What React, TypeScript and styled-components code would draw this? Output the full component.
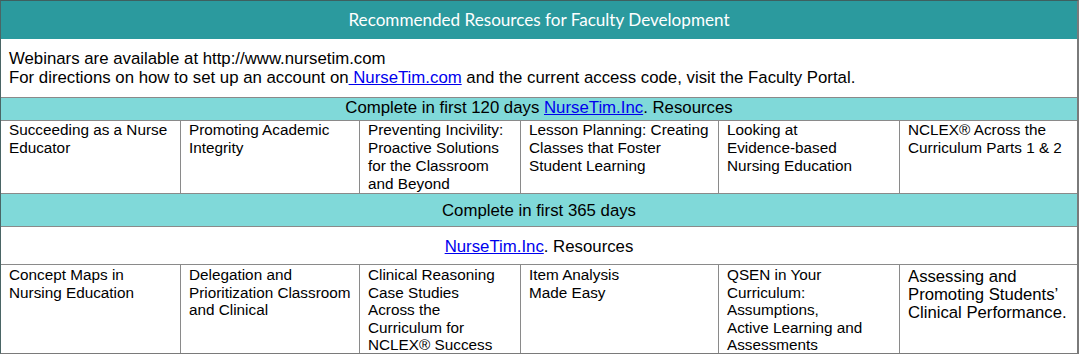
import React from 'react';
import styled, { createGlobalStyle } from 'styled-components';

const GlobalStyle = createGlobalStyle`
  html, body {
    margin: 0;
    padding: 0;
    background: #ffffff;
  }
  body {
    font-family: "Liberation Sans", Arial, sans-serif;
    color: #000000;
  }
`;

const COLS = '180px 179px 161px 198px 181px 1fr';

const Table = styled.div`
  width: 1079px;
  box-sizing: border-box;
  border-top: 1px solid #3e5f5f;
  border-left: 1px solid #4a6565;
  border-right: 2px solid #7a7a7a;
  border-bottom: 1px solid #7a7a7a;
`;

const TitleBar = styled.div`
  height: 38px;
  background: #2b9a9e;
  color: #ffffff;
  font-family: Lato, "Open Sans", sans-serif;
  font-size: 17.1px;
  display: flex;
  align-items: center;
  justify-content: center;
  padding-bottom: 1px;
  box-sizing: border-box;
`;

const Intro = styled.div`
  height: 59px;
  box-sizing: border-box;
  padding: 10px 8px 0;
  font-size: 16.8px;
  line-height: 19px;
  border-bottom: 1px solid #8a8a8a;
`;

const Link = styled.a`
  color: #0000ee;
  text-decoration: underline;
`;

const Band = styled.div<{ $tone: 'teal' | 'white'; $h: number; $top?: boolean }>`
  height: ${p => p.$h}px;
  box-sizing: border-box;
  background: ${p => (p.$tone === 'teal' ? '#80d9d9' : '#ffffff')};
  border-bottom: 1px solid #8a8a8a;
  display: flex;
  justify-content: center;
  align-items: ${p => (p.$top ? 'flex-start' : 'center')};
  padding-top: ${p => (p.$top ? 0 : 1)}px;
  font-size: 16.8px;
  line-height: 19px;
`;

const CellRow = styled.div<{ $h: number }>`
  display: grid;
  grid-template-columns: ${COLS};
  height: ${p => p.$h}px;
  border-bottom: 1px solid #8a8a8a;
  box-sizing: border-box;

  &:last-child {
    border-bottom: none;
  }
`;

const Cell = styled.div<{ $big?: boolean; $pt: number; $lh: number }>`
  box-sizing: border-box;
  padding: ${p => p.$pt + (p.$big ? 2 : 0)}px 0 0 8px;
  font-size: ${p => (p.$big ? 16.7 : 15.3)}px;
  line-height: ${p => (p.$big ? 18 : p.$lh)}px;
  white-space: nowrap;
  border-right: 1px solid #8a8a8a;
  overflow: hidden;

  &:last-child {
    border-right: none;
  }
`;

const first120 = [
  ['Succeeding as a Nurse', 'Educator'],
  ['Promoting Academic', 'Integrity'],
  ['Preventing Incivility:', 'Proactive Solutions', 'for the Classroom', 'and Beyond'],
  ['Lesson Planning: Creating', 'Classes that Foster', 'Student Learning'],
  ['Looking at', 'Evidence-based', 'Nursing Education'],
  ['NCLEX® Across the', 'Curriculum Parts 1 & 2'],
];

const first365 = [
  ['Concept Maps in', 'Nursing Education'],
  ['Delegation and', 'Prioritization Classroom', 'and Clinical'],
  ['Clinical Reasoning', 'Case Studies', 'Across the', 'Curriculum for', 'NCLEX® Success'],
  ['Item Analysis', 'Made Easy'],
  ['QSEN in Your', 'Curriculum:', 'Assumptions,', 'Active Learning and', 'Assessments'],
  ['Assessing and', 'Promoting Students’', 'Clinical Performance.'],
];

const Lines = ({ lines }: { lines: string[] }) => (
  <>
    {lines.map((l, i) => (
      <div key={i}>{l}</div>
    ))}
  </>
);

export default function App() {
  return (
    <>
      <GlobalStyle />
      <Table>
        <TitleBar>Recommended Resources for Faculty Development</TitleBar>
        <Intro>
          <div>Webinars are available at http://www.nursetim.com</div>
          <div>
            For directions on how to set up an account on<Link> NurseTim.com</Link> and the current access
            code, visit the Faculty Portal.
          </div>
        </Intro>
        <Band $tone="teal" $h={23} $top>
          <span>
            Complete in first 120 days <Link>NurseTim.Inc</Link>. Resources
          </span>
        </Band>
        <CellRow $h={73}>
          {first120.map((c, i) => (
            <Cell key={i} $pt={0} $lh={18}>
              <Lines lines={c} />
            </Cell>
          ))}
        </CellRow>
        <Band $tone="teal" $h={33}>
          Complete in first 365 days
        </Band>
        <Band $tone="white" $h={38}>
          <span>
            <Link>NurseTim.Inc</Link>. Resources
          </span>
        </Band>
        <CellRow $h={88}>
          {first365.map((c, i) => (
            <Cell key={i} $pt={1} $lh={17.5} $big={i === 5}>
              <Lines lines={c} />
            </Cell>
          ))}
        </CellRow>
      </Table>
    </>
  );
}
